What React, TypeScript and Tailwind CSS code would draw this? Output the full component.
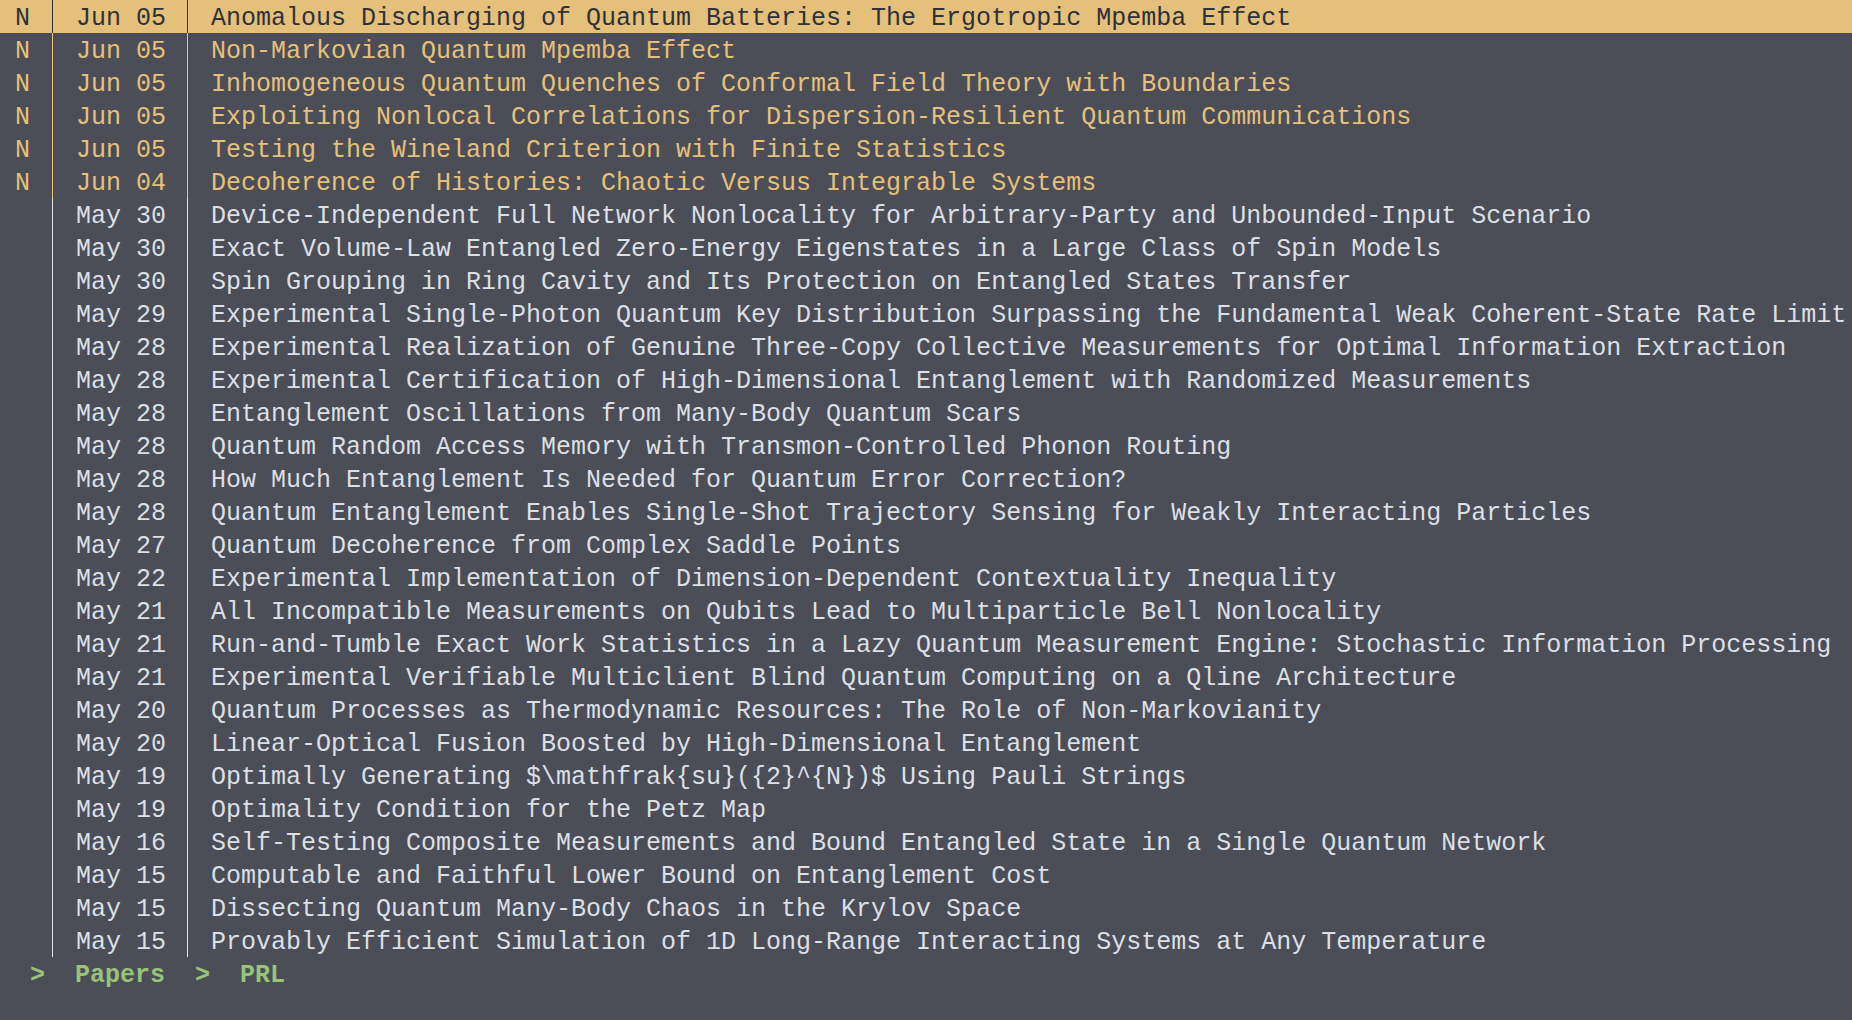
import React from 'react';

type Paper = { isNew: boolean; date: string; title: string };

const papers: Paper[] = [
  { isNew: true, date: 'Jun 05', title: 'Anomalous Discharging of Quantum Batteries: The Ergotropic Mpemba Effect' },
  { isNew: true, date: 'Jun 05', title: 'Non-Markovian Quantum Mpemba Effect' },
  { isNew: true, date: 'Jun 05', title: 'Inhomogeneous Quantum Quenches of Conformal Field Theory with Boundaries' },
  { isNew: true, date: 'Jun 05', title: 'Exploiting Nonlocal Correlations for Dispersion-Resilient Quantum Communications' },
  { isNew: true, date: 'Jun 05', title: 'Testing the Wineland Criterion with Finite Statistics' },
  { isNew: true, date: 'Jun 04', title: 'Decoherence of Histories: Chaotic Versus Integrable Systems' },
  { isNew: false, date: 'May 30', title: 'Device-Independent Full Network Nonlocality for Arbitrary-Party and Unbounded-Input Scenario' },
  { isNew: false, date: 'May 30', title: 'Exact Volume-Law Entangled Zero-Energy Eigenstates in a Large Class of Spin Models' },
  { isNew: false, date: 'May 30', title: 'Spin Grouping in Ring Cavity and Its Protection on Entangled States Transfer' },
  { isNew: false, date: 'May 29', title: 'Experimental Single-Photon Quantum Key Distribution Surpassing the Fundamental Weak Coherent-State Rate Limit' },
  { isNew: false, date: 'May 28', title: 'Experimental Realization of Genuine Three-Copy Collective Measurements for Optimal Information Extraction' },
  { isNew: false, date: 'May 28', title: 'Experimental Certification of High-Dimensional Entanglement with Randomized Measurements' },
  { isNew: false, date: 'May 28', title: 'Entanglement Oscillations from Many-Body Quantum Scars' },
  { isNew: false, date: 'May 28', title: 'Quantum Random Access Memory with Transmon-Controlled Phonon Routing' },
  { isNew: false, date: 'May 28', title: 'How Much Entanglement Is Needed for Quantum Error Correction?' },
  { isNew: false, date: 'May 28', title: 'Quantum Entanglement Enables Single-Shot Trajectory Sensing for Weakly Interacting Particles' },
  { isNew: false, date: 'May 27', title: 'Quantum Decoherence from Complex Saddle Points' },
  { isNew: false, date: 'May 22', title: 'Experimental Implementation of Dimension-Dependent Contextuality Inequality' },
  { isNew: false, date: 'May 21', title: 'All Incompatible Measurements on Qubits Lead to Multiparticle Bell Nonlocality' },
  { isNew: false, date: 'May 21', title: 'Run-and-Tumble Exact Work Statistics in a Lazy Quantum Measurement Engine: Stochastic Information Processing' },
  { isNew: false, date: 'May 21', title: 'Experimental Verifiable Multiclient Blind Quantum Computing on a Qline Architecture' },
  { isNew: false, date: 'May 20', title: 'Quantum Processes as Thermodynamic Resources: The Role of Non-Markovianity' },
  { isNew: false, date: 'May 20', title: 'Linear-Optical Fusion Boosted by High-Dimensional Entanglement' },
  { isNew: false, date: 'May 19', title: 'Optimally Generating $\\mathfrak{su}({2}^{N})$ Using Pauli Strings' },
  { isNew: false, date: 'May 19', title: 'Optimality Condition for the Petz Map' },
  { isNew: false, date: 'May 16', title: 'Self-Testing Composite Measurements and Bound Entangled State in a Single Quantum Network' },
  { isNew: false, date: 'May 15', title: 'Computable and Faithful Lower Bound on Entanglement Cost' },
  { isNew: false, date: 'May 15', title: 'Dissecting Quantum Many-Body Chaos in the Krylov Space' },
  { isNew: false, date: 'May 15', title: 'Provably Efficient Simulation of 1D Long-Range Interacting Systems at Any Temperature' },
];

const Row: React.FC<{ paper: Paper; selected: boolean }> = ({ paper, selected }) => {
  const tone = selected
    ? 'bg-[#e5c07b] text-[#2f323a]'
    : paper.isNew
      ? 'text-[#e5c07b]'
      : 'text-[#dcdfe4]';
  return (
    <div className={`flex h-[33px] whitespace-pre ${tone}`}>
      <div className="w-[52px] shrink-0 pl-[15px] pt-[4px]">{paper.isNew ? 'N' : ' '}</div>
      <div className="h-full w-[135px] shrink-0 border-l pl-[23px] pt-[4px]">{paper.date}</div>
      <div className="h-full flex-1 overflow-hidden border-l pl-[23px] pt-[4px]">{paper.title}</div>
    </div>
  );
};

const App: React.FC = () => {
  return (
    <div className="h-[1020px] w-[1852px] overflow-hidden bg-[#4b4e57] font-['Liberation_Mono',monospace] text-[25px] leading-[29px]">
      {papers.map((p, i) => (
        <Row key={i} paper={p} selected={i === 0} />
      ))}
      <div className="h-[33px] whitespace-pre pt-[4px] font-bold text-[#98c379]">
        {'  >  Papers  >  PRL'}
      </div>
    </div>
  );
};

export default App;
